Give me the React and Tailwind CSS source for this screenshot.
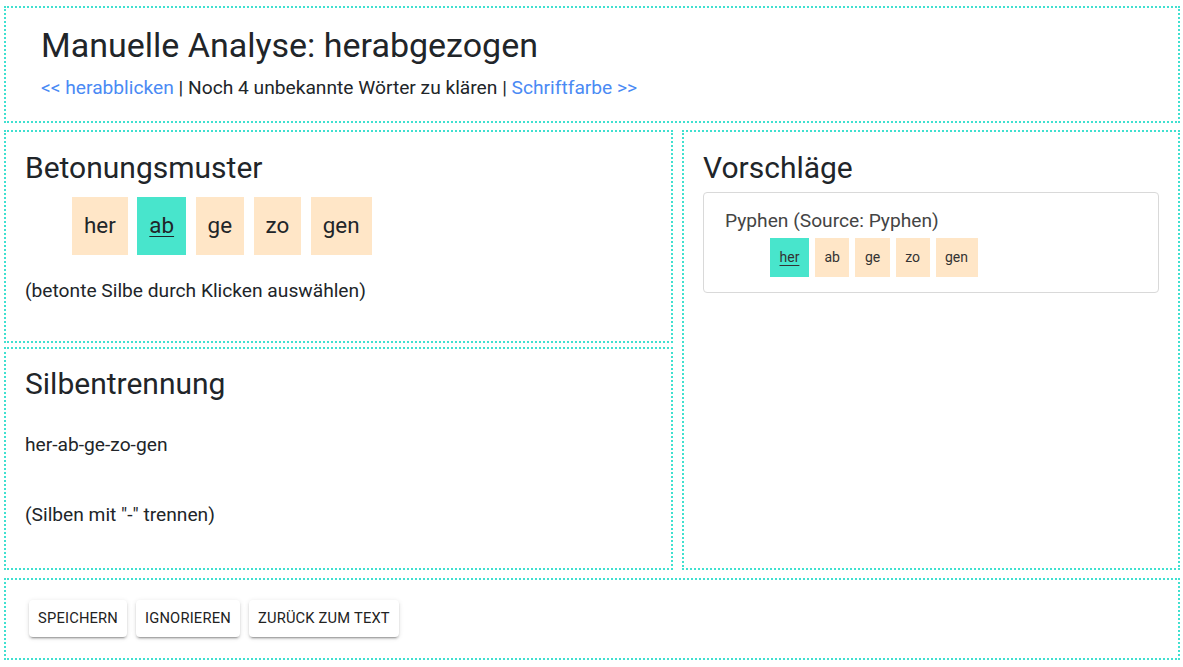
import React from 'react';

const syllables = ['her', 'ab', 'ge', 'zo', 'gen'];

const Box = ({ className = '', children }) => (
  <div className={`border-2 border-dotted border-[#40e0d0] ${className}`}>{children}</div>
);

const BigSyllable = ({ text, stressed }) => (
  <span
    className={`px-[12px] py-[12px] text-[22.4px] leading-[1.5] cursor-pointer ${
      stressed ? 'bg-[#48e5cc] underline underline-offset-[3px] decoration-1' : 'bg-[#ffe6c7]'
    }`}
  >
    {text}
  </span>
);

const SmallSyllable = ({ text, stressed }) => (
  <span
    className={`px-[9.5px] py-[9px] text-[14px] leading-[21px] text-[#333] cursor-pointer ${
      stressed ? 'bg-[#48e5cc] underline underline-offset-[3px] decoration-1' : 'bg-[#ffe6c7]'
    }`}
  >
    {text}
  </span>
);

const Button = ({ children }) => (
  <button className="h-[37px] px-[9px] rounded-[4px] bg-white text-[14.7px] tracking-[0.2px] text-[#222] uppercase shadow-[0px_3px_1px_-2px_rgba(0,0,0,0.2),0px_2px_2px_0px_rgba(0,0,0,0.14),0px_1px_5px_0px_rgba(0,0,0,0.12)]">
    {children}
  </button>
);

export default function App() {
  return (
    <div className="w-[1183px] h-[667px] bg-white pl-[4px] pr-[3px] pt-[6px] text-[#212529] font-['Roboto','Liberation_Sans',sans-serif]">
      {/* Header */}
      <Box className="h-[117px] pl-[35px] pt-[16.5px]">
        <h2 className="text-[34px] leading-[1.2] font-normal">Manuelle Analyse: herabgezogen</h2>
        <div className="mt-[9px] text-[19.2px] leading-[1.5]">
          <a className="text-[#4a8af4] cursor-pointer">&lt;&lt; herabblicken</a>
          {' | Noch 4 unbekannte Wörter zu klären | '}
          <a className="text-[#4a8af4] cursor-pointer">Schriftfarbe &gt;&gt;</a>
        </div>
      </Box>

      <div className="mt-[7px] h-[440px] flex gap-[9px]">
        {/* Left column */}
        <div className="w-[669px] flex flex-col gap-[4px]">
          <Box className="h-[213px] px-[19px] pt-[18px]">
            <h3 className="text-[30px] leading-[1.2] font-normal">Betonungsmuster</h3>
            <div className="mt-[11px] pl-[47px] flex gap-[9.5px]">
              {syllables.map((s) => (
                <BigSyllable key={s} text={s} stressed={s === 'ab'} />
              ))}
            </div>
            <p className="mt-[22.5px] text-[19.2px] leading-[1.5]">(betonte Silbe durch Klicken auswählen)</p>
          </Box>
          <Box className="flex-1 px-[19px] pt-[17px]">
            <h3 className="text-[30px] leading-[1.2] font-normal">Silbentrennung</h3>
            <p className="mt-[28.5px] text-[19.2px] leading-[1.5]">her-ab-ge-zo-gen</p>
            <p className="mt-[42px] text-[19.2px] leading-[1.5]">(Silben mit "-" trennen)</p>
          </Box>
        </div>

        {/* Right column */}
        <Box className="flex-1 px-[19px] pt-[18px]">
          <h3 className="text-[30px] leading-[1.2] font-normal">Vorschläge</h3>
          <div className="mt-[6px] h-[101px] border border-[#d9d9d9] rounded-[4px] pl-[21px] pt-[13.5px]">
            <div className="text-[19.2px] leading-[1.5] text-[#444]">Pyphen (Source: Pyphen)</div>
            <div className="mt-[3px] pl-[45px] flex gap-[6px]">
              {syllables.map((s) => (
                <SmallSyllable key={s} text={s} stressed={s === 'her'} />
              ))}
            </div>
          </div>
        </Box>
      </div>

      {/* Footer */}
      <Box className="mt-[8px] h-[82px] pl-[23px] pt-[20px] flex items-start gap-[9px]">
        <Button>Speichern</Button>
        <Button>Ignorieren</Button>
        <Button>Zurück zum Text</Button>
      </Box>
    </div>
  );
}
